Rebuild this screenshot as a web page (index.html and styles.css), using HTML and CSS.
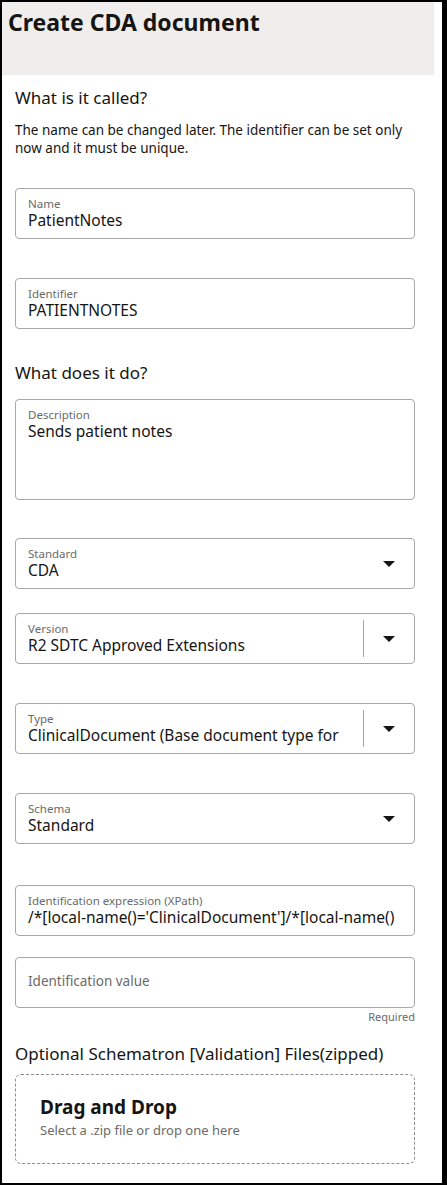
FILE: index.html
```html
<!DOCTYPE html>
<html lang="en">
<head>
<meta charset="utf-8">
<title>Create CDA document</title>
<link rel="stylesheet" href="styles.css">
</head>
<body>
<div class="frame">
  <header class="hdr"><h1 class="title">Create CDA document</h1></header>
  <main class="content">
    <h2 class="sec sec-first">What is it called?</h2>
    <p class="help">The name can be changed later. The identifier can be set only<br>now and it must be unique.</p>

    <div class="field gap-name">
      <div class="fbody"><span class="lbl">Name</span><span class="val">PatientNotes</span></div>
    </div>
    <div class="field gap-39">
      <div class="fbody"><span class="lbl">Identifier</span><span class="val">PATIENTNOTES</span></div>
    </div>

    <h2 class="sec sec-second">What does it do?</h2>
    <div class="field area gap-15">
      <div class="fbody"><span class="lbl">Description</span><span class="val">Sends patient notes</span></div>
    </div>

    <div class="field gap-38">
      <div class="fbody"><span class="lbl">Standard</span><span class="val">CDA</span></div>
      <div class="sel-btn"><svg class="caret" viewBox="0 0 12 6" width="12" height="6"><path d="M0 0H12L6 6Z"/></svg></div>
    </div>
    <div class="field gap-24">
      <div class="fbody"><span class="lbl">Version</span><span class="val">R2 SDTC Approved Extensions</span></div>
      <div class="sel-btn split"><svg class="caret" viewBox="0 0 12 6" width="12" height="6"><path d="M0 0H12L6 6Z"/></svg></div>
    </div>
    <div class="field gap-39">
      <div class="fbody"><span class="lbl">Type</span><span class="val">ClinicalDocument (Base document type for</span></div>
      <div class="sel-btn split"><svg class="caret" viewBox="0 0 12 6" width="12" height="6"><path d="M0 0H12L6 6Z"/></svg></div>
    </div>
    <div class="field gap-39">
      <div class="fbody"><span class="lbl">Schema</span><span class="val">Standard</span></div>
      <div class="sel-btn"><svg class="caret" viewBox="0 0 12 6" width="12" height="6"><path d="M0 0H12L6 6Z"/></svg></div>
    </div>

    <div class="field gap-41">
      <div class="fbody clip"><span class="lbl">Identification expression (XPath)</span><span class="val">/*[local-name()='ClinicalDocument']/*[local-name()</span></div>
    </div>
    <div class="field gap-21">
      <div class="fbody empty"><span class="placeholder">Identification value</span></div>
    </div>
    <div class="req">Required</div>

    <h2 class="sec sec-third">Optional Schematron [Validation] Files(zipped)</h2>
    <div class="drop">
      <div class="drop-title">Drag and Drop</div>
      <div class="drop-sub">Select a .zip file or drop one here</div>
    </div>
  </main>
</div>
</body>
</html>
```

FILE: styles.css
```css
html, body {
  margin: 0;
  padding: 0;
}
body {
  background: #000;
  font-family: "Noto Sans", "Open Sans", "DejaVu Sans", sans-serif;
  color: #161513;
}
.frame {
  margin: 2px 5px 2px 2px;
  height: 1181px;
  background: #fff;
  overflow: hidden;
}
.hdr {
  height: 73px;
  margin-right: 8px;
  background: #f0eeec;
  padding: 5px 0 0 6px;
  box-sizing: border-box;
}
.title {
  margin: 0;
  font-size: 23px;
  font-weight: 700;
  line-height: 30px;
}
.content {
  display: flex;
  flex-direction: column;
  width: 400px;
  padding-left: 13px;
}
.sec {
  margin: 0;
  font-size: 17px;
  font-weight: 400;
  line-height: 22px;
}
.sec-first { margin-top: 12px; }
.sec-second { margin-top: 33px; }
.sec-third { margin-top: 19px; }
.help {
  margin: 12px 0 0;
  font-size: 13.5px;
  line-height: 18px;
}
.field {
  display: flex;
  height: 51px;
  box-sizing: border-box;
  border: 1px solid #a9a8a6;
  border-radius: 4px;
}
.field.area { height: 101px; }
.gap-name { margin-top: 31px; }
.gap-39 { margin-top: 39px; }
.gap-38 { margin-top: 38px; }
.gap-41 { margin-top: 41px; }
.gap-24 { margin-top: 24px; }
.gap-21 { margin-top: 21px; }
.gap-15 { margin-top: 15px; }
.fbody {
  flex: 1;
  min-width: 0;
  display: flex;
  flex-direction: column;
  padding: 8px 12px 0;
}
.fbody.clip { padding-right: 6px; }
.fbody.empty { padding-top: 14px; }
.lbl {
  font-size: 11.5px;
  line-height: 14px;
  color: #6b6a68;
  white-space: nowrap;
}
.val {
  font-size: 15.5px;
  line-height: 19px;
  white-space: nowrap;
}
.placeholder {
  font-size: 13.5px;
  line-height: 18px;
  color: #6b6a68;
}
.sel-btn {
  width: 50px;
  display: flex;
  align-items: center;
  justify-content: center;
  flex: none;
}
.sel-btn.split {
  border-left: 1px solid #a9a8a6;
  margin: 6px 0;
}
.caret { display: block; fill: #161513; }
.req {
  margin-top: 2px;
  text-align: right;
  font-size: 11px;
  line-height: 14px;
  color: #6b6a68;
}
.drop {
  margin-top: 9px;
  height: 90px;
  box-sizing: border-box;
  border: 1px dashed #8d8c8a;
  border-radius: 6px;
  padding: 20px 24px 0;
}
.drop-title {
  font-size: 19px;
  font-weight: 700;
  line-height: 25px;
}
.drop-sub {
  margin-top: 2px;
  font-size: 13px;
  line-height: 17px;
  color: #6b6a68;
}
```
